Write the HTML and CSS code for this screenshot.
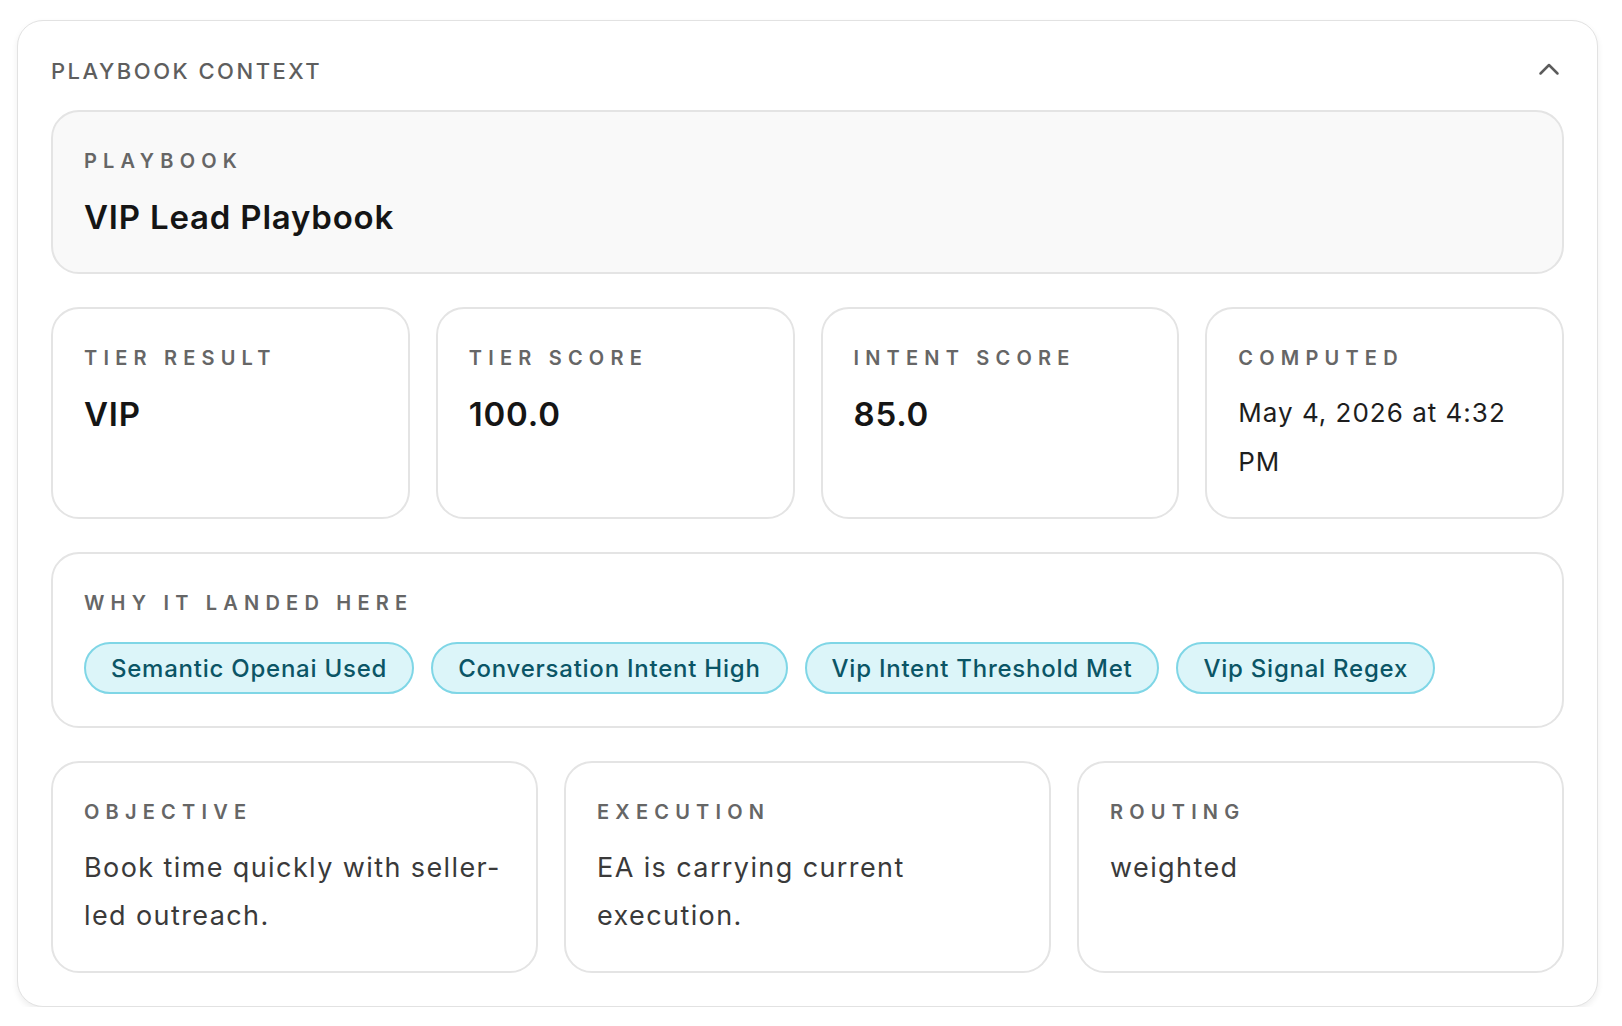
FILE: index.html
```html
<!DOCTYPE html>
<html lang="en">
<head>
<meta charset="utf-8">
<title>Playbook Context</title>
<link rel="stylesheet" href="styles.css">
</head>
<body>
<section class="panel">
  <header class="panel-head">
    <h2 class="panel-title">PLAYBOOK CONTEXT</h2>
    <button class="collapse" type="button" aria-label="Collapse">
      <svg width="22" height="14" viewBox="0 0 22 14"><polyline points="2.5,11.5 11,3 19.5,11.5" fill="none" stroke="#5c5c5c" stroke-width="2.5" stroke-linecap="round" stroke-linejoin="round"/></svg>
    </button>
  </header>
  <div class="stack">
    <div class="card card-muted">
      <div class="label">PLAYBOOK</div>
      <div class="value-strong value-title">VIP Lead Playbook</div>
    </div>
    <div class="grid-4">
      <div class="card">
        <div class="label">TIER RESULT</div>
        <div class="value-strong value-stat">VIP</div>
      </div>
      <div class="card">
        <div class="label">TIER SCORE</div>
        <div class="value-strong value-stat">100.0</div>
      </div>
      <div class="card">
        <div class="label">INTENT SCORE</div>
        <div class="value-strong value-stat">85.0</div>
      </div>
      <div class="card">
        <div class="label">COMPUTED</div>
        <div class="value-date">May 4, 2026 at 4:32 PM</div>
      </div>
    </div>
    <div class="card card-reasons">
      <div class="label">WHY IT LANDED HERE</div>
      <div class="chips">
        <span class="chip">Semantic Openai Used</span>
        <span class="chip">Conversation Intent High</span>
        <span class="chip">Vip Intent Threshold Met</span>
        <span class="chip">Vip Signal Regex</span>
      </div>
    </div>
    <div class="grid-3">
      <div class="card">
        <div class="label">OBJECTIVE</div>
        <div class="value-text">Book time quickly with seller-led outreach.</div>
      </div>
      <div class="card">
        <div class="label">EXECUTION</div>
        <div class="value-text">EA is carrying current execution.</div>
      </div>
      <div class="card">
        <div class="label">ROUTING</div>
        <div class="value-text">weighted</div>
      </div>
    </div>
  </div>
</section>
</body>
</html>
```

FILE: styles.css
```css
* { box-sizing: border-box; }

html, body {
  margin: 0;
  padding: 0;
  background: #ffffff;
}

body {
  font-family: Inter, "Noto Sans", "DejaVu Sans", sans-serif;
  color: #161616;
}

.panel {
  margin: 20px 24px 0 17px;
  border: 1px solid #e2e2e2;
  border-radius: 26px;
  padding: 33px 33px 33px;
  background: #ffffff;
  box-shadow: 0 3px 6px rgba(0, 0, 0, 0.07);
}

.panel-head {
  display: flex;
  align-items: flex-start;
  justify-content: space-between;
  height: 26px;
  margin-bottom: 30px;
}

.panel-title {
  margin: 0;
  font-size: 22px;
  line-height: 35px;
  font-weight: 500;
  color: #5e5e5e;
  letter-spacing: 2.5px;
}

.collapse {
  display: flex;
  align-items: center;
  justify-content: center;
  width: 30px;
  height: 30px;
  padding: 0;
  border: none;
  background: transparent;
}

.stack {
  display: flex;
  flex-direction: column;
  gap: 33px;
}

.card {
  border: 2px solid #e4e4e4;
  border-radius: 28px;
  padding: 37px 24px 31px 31px;
  background: #ffffff;
}

.card-muted {
  background: #f9f9f9;
}

.card-reasons {
  padding-bottom: 32px;
}

.grid-4 {
  display: grid;
  grid-template-columns: repeat(4, 1fr);
  gap: 26px;
}

.grid-3 {
  display: grid;
  grid-template-columns: repeat(3, 1fr);
  gap: 26px;
}

.label {
  font-size: 20px;
  line-height: 24px;
  font-weight: 600;
  letter-spacing: 6.2px;
  color: #666666;
  margin-bottom: 20px;
}

.value-strong {
  font-size: 33px;
  line-height: 48px;
  font-weight: 600;
  letter-spacing: 0.8px;
  color: #151515;
}

.value-title {
  margin-top: 2px;
}

.value-stat {
  margin-top: 8px;
}

.value-date {
  margin-top: -2px;
  font-size: 26px;
  line-height: 49px;
  font-weight: 400;
  letter-spacing: 1px;
  color: #1e1e1e;
}

.value-text {
  font-size: 27px;
  line-height: 48px;
  font-weight: 400;
  letter-spacing: 1.4px;
  color: #3a3a3a;
}

.chips {
  display: flex;
  flex-wrap: wrap;
  gap: 17px;
  margin-top: 27px;
}

.chip {
  display: inline-flex;
  align-items: center;
  height: 52px;
  padding: 0 25px;
  border: 2px solid #7fd6e6;
  border-radius: 999px;
  background: #dcf5f9;
  color: #0b5566;
  font-size: 24px;
  font-weight: 500;
  letter-spacing: 0.76px;
}
```
